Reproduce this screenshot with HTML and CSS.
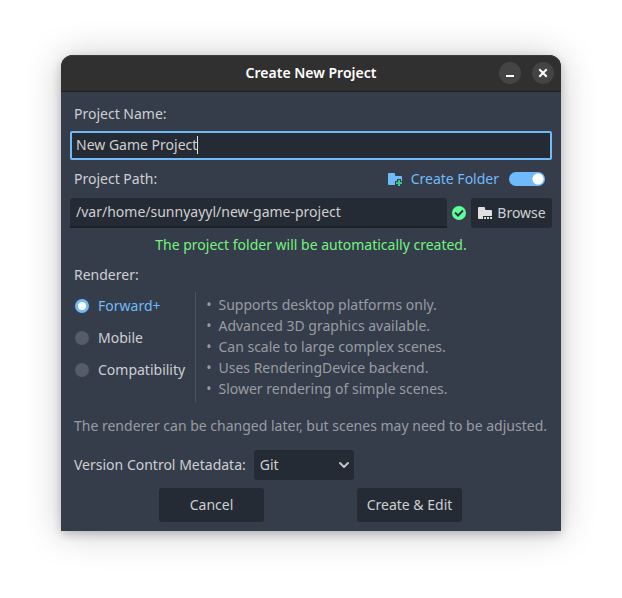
FILE: index.html
```html
<!DOCTYPE html>
<html lang="en">
<head>
<meta charset="utf-8">
<meta name="viewport" content="width=device-width, initial-scale=1">
<title>Create New Project</title>
<link rel="stylesheet" href="styles.css">
</head>
<body>
<main class="window">
  <header class="titlebar">
    <h1 class="title">Create New Project</h1>
    <div class="window-controls">
      <button class="window-button" type="button" aria-label="Minimize">
        <svg viewBox="0 0 22 22"><path d="M7 13h8v2H7z" fill="#fff"/></svg>
      </button>
      <button class="window-button" type="button" aria-label="Close">
        <svg viewBox="0 0 22 22"><path d="M8 8l6 6M14 8l-6 6" fill="none" stroke="#fff" stroke-width="2" stroke-linecap="square"/></svg>
      </button>
    </div>
  </header>
  <form class="content">
    <label class="label" for="project-name">Project Name:</label>
    <div class="name-field">
      <input class="input input-focused" id="project-name" type="text" value="New Game Project">
      <span class="caret"></span>
    </div>

    <div class="path-header">
      <label for="project-path">Project Path:</label>
      <label class="folder-toggle">
        <svg class="icon" viewBox="0 0 16 16">
          <path d="M2 2h5a1 1 0 0 1 1 1v1a1 1 0 0 0 1 1h5a1 1 0 0 1 1 1v4h-1V8h-4v2H8v4H2a1 1 0 0 1-1-1V3a1 1 0 0 1 1-1z" fill="#70bafa"/>
          <path d="M11 9h2v2h2v2h-2v2h-2v-2H9v-2h2z" fill="#3ac78b"/>
        </svg>
        <span class="folder-text">Create Folder</span>
        <input class="switch" type="checkbox" checked>
      </label>
    </div>
    <div class="path-row">
      <input class="input input-path" id="project-path" type="text" value="/var/home/sunnyayyl/new-game-project">
      <svg class="icon" viewBox="0 0 16 16">
        <circle cx="8" cy="8" r="7" fill="#5fff97"/>
        <path d="M4 7.500l3 3 5-5" fill="none" stroke="#2d3540" stroke-width="2"/>
      </svg>
      <button class="button browse" type="button">
        <svg class="icon" viewBox="0 0 16 16">
          <path d="M2 2h5a1 1 0 0 1 1 1v1a1 1 0 0 0 1 1h5a1 1 0 0 1 1 1v5H6v3H2a1 1 0 0 1-1-1V3a1 1 0 0 1 1-1z" fill="#e0e0e0"/>
          <path d="M7 12h2v2H7zM10 12h2v2h-2zM13 12h2v2h-2z" fill="#e0e0e0"/>
        </svg>
        Browse
      </button>
    </div>
    <p class="message">The project folder will be automatically created.</p>

    <span class="label" id="renderer-label">Renderer:</span>
    <div class="renderer">
      <div class="radios" role="radiogroup" aria-labelledby="renderer-label">
        <label class="radio-row"><input class="radio" type="radio" name="renderer" checked><span>Forward+</span></label>
        <label class="radio-row"><input class="radio" type="radio" name="renderer"><span>Mobile</span></label>
        <label class="radio-row"><input class="radio" type="radio" name="renderer"><span>Compatibility</span></label>
      </div>
      <ul class="features">
        <li>Supports desktop platforms only.</li>
        <li>Advanced 3D graphics available.</li>
        <li>Can scale to large complex scenes.</li>
        <li>Uses RenderingDevice backend.</li>
        <li>Slower rendering of simple scenes.</li>
      </ul>
    </div>
    <p class="note">The renderer can be changed later, but scenes may need to be adjusted.</p>

    <div class="vcs-row">
      <label for="vcs">Version Control Metadata:</label>
      <div class="select-wrap">
        <select class="select" id="vcs"><option>Git</option><option>None</option></select>
        <svg class="chevron" viewBox="0 0 12 12"><path d="M2 4l4 4 4-4" fill="none" stroke="#c0c2c5" stroke-width="2" stroke-linecap="round" stroke-linejoin="round"/></svg>
      </div>
    </div>
    <div class="actions">
      <button class="button action" type="button">Cancel</button>
      <button class="button action" type="submit">Create &amp; Edit</button>
    </div>
  </form>
</main>
</body>
</html>
```
FILE: styles.css
```css
* { box-sizing: border-box; }

body {
  margin: 0;
  padding: 55px 61px;
  background: #fff;
  color: #cdcfd2;
  font: 14px/20px "Noto Sans", sans-serif;
}

button, input, select { font: inherit; color: inherit; margin: 0; }

.window {
  background: #363d4a;
  border-radius: 12px 12px 0 0;
  box-shadow: 0 3px 10px rgba(0, 0, 0, 0.2), 0 2px 36px rgba(0, 0, 0, 0.22);
}

.titlebar {
  display: grid;
  grid-template-columns: 1fr auto 1fr;
  align-items: center;
  height: 37px;
  padding: 0 7px;
  background: #303030;
  border-bottom: 1px solid #1f1f21;
  border-radius: 12px 12px 0 0;
  box-shadow: inset 0 1px #3b3d3c;
}

.title {
  grid-column: 2;
  margin: 0;
  color: #fff;
  font-size: 14px;
  font-weight: 600;
  line-height: 20px;
}

.window-controls { display: flex; justify-content: flex-end; gap: 11px; }

.window-button {
  width: 22px;
  height: 22px;
  padding: 0;
  border: 0;
  border-radius: 50%;
  background: #444;
}

.window-button svg { display: block; }

.content {
  display: flex;
  flex-direction: column;
  padding: 12px 9px 9px;
}

.label, .path-header, .note, .vcs-row { padding-left: 4px; }

.name-field { position: relative; margin-top: 7px; }

.input {
  display: block;
  width: 100%;
  min-width: 0;
  height: 29px;
  padding: 0 4px 2px;
  border: 2px solid transparent;
  border-radius: 3px;
  background: #252b34;
  outline: 0;
}

.input-focused { border-color: #70bafa; border-radius: 2px; }

.caret {
  position: absolute;
  top: 5px;
  left: 127px;
  width: 1px;
  height: 18px;
  background: #e0e0e0;
}

.path-header {
  display: flex;
  justify-content: space-between;
  align-items: center;
  padding-right: 7px;
  margin: 9px 0;
}

.folder-toggle { display: flex; align-items: center; gap: 8px; color: #70bafa; }

.folder-text { margin-right: 2px; }

.icon { flex: none; width: 16px; height: 16px; }

.switch {
  appearance: none;
  width: 36px;
  height: 14px;
  border-radius: 7px;
  background: radial-gradient(circle at 29px 7px, #fff 5px, #70bafa 6px);
}

.path-row { display: flex; align-items: center; gap: 4px; }

.input-path {
  flex: 1;
  height: 30px;
  padding: 0 6px 2px;
  border-width: 0 0 2px;
  border-color: #1b2027;
  border-radius: 3px 3px 0 0;
}

.button {
  display: flex;
  align-items: center;
  justify-content: center;
  border: 0;
  border-radius: 3px;
  background: #252b34;
}

.browse { width: 81px; height: 30px; padding: 0; gap: 4px; }

.message { margin: 7px 0 10px; color: #73f280; text-align: center; }

.renderer { display: flex; margin: 7px 0 14px; }

.radios { padding-right: 10px; margin-top: -2px; }

.radio-row { display: flex; align-items: center; gap: 9px; height: 32px; padding-left: 5px; }

.radio {
  appearance: none;
  width: 14px;
  height: 14px;
  border-radius: 50%;
  background: #555c66;
}

.radio:checked { background: #fff; border: 3px solid #70bafa; }

.radio:checked + span { color: #70bafa; }

.features {
  flex: 1;
  margin: 0;
  padding: 2px 0 3px 10px;
  border-left: 1px solid #4c525e;
  color: #989ca3;
  line-height: 21px;
  list-style: none;
}

.features li { display: flex; gap: 7px; }

.features li::before { content: "•"; }

.note { margin: 0 0 14px; color: #989ca3; }

.vcs-row { display: flex; align-items: center; gap: 8px; }

.select-wrap { position: relative; width: 100px; }

.select {
  appearance: none;
  display: block;
  width: 100%;
  height: 30px;
  padding: 0 6px;
  border: 0;
  border-radius: 3px;
  background: #252b34;
}

.chevron {
  position: absolute;
  top: 9px;
  right: 4px;
  width: 12px;
  height: 12px;
  pointer-events: none;
}

.actions {
  display: flex;
  justify-content: space-evenly;
  gap: 4px;
  margin-top: 8px;
  padding-right: 1px;
}

.action { width: 105px; height: 34px; padding: 0; }
```
